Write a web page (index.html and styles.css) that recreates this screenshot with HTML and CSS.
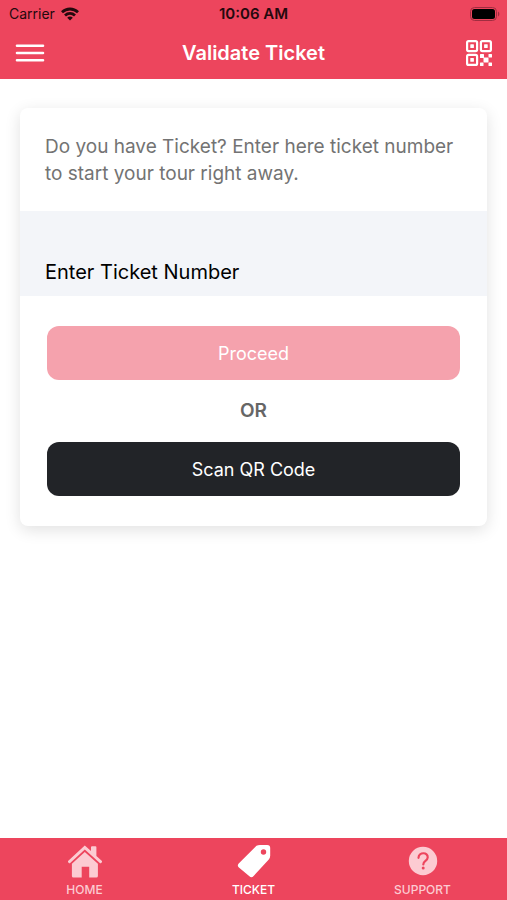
FILE: index.html
```html
<!DOCTYPE html>
<html lang="en">
<head>
<meta charset="utf-8">
<meta name="viewport" content="width=device-width, initial-scale=1">
<title>Validate Ticket</title>
<link rel="stylesheet" href="styles.css">
</head>
<body>
<header class="header">
  <div class="status">
    <div class="carrier">
      <span>Carrier</span>
      <svg width="18" height="14" viewBox="0 0 18 14" fill="none" stroke="currentColor" stroke-width="2.8" aria-hidden="true">
        <path d="M1 5.2C5.6.9 12.4.9 17 5.2"/>
        <path d="M4 8.5c2.9-2.7 7.1-2.7 10 0"/>
        <path d="M6.2 10.7c1.6-1.5 4-1.5 5.6 0L9 13.6z" fill="currentColor" stroke="none"/>
      </svg>
    </div>
    <time>10:06 AM</time>
    <svg class="battery" width="30" height="14" viewBox="0 0 30 14" aria-hidden="true">
      <rect x=".5" y=".5" width="26" height="13" rx="4" fill="none" stroke="#a02d40"/>
      <rect x="2" y="2" width="23" height="10" rx="2.5" fill="#000"/>
      <path d="M28 4.5c1.8.8 1.8 4.2 0 5z" fill="#a02d40"/>
    </svg>
  </div>
  <div class="toolbar">
    <button class="icon-button" type="button" aria-label="Menu">
      <svg width="30" height="20" viewBox="0 0 30 20" stroke="currentColor" stroke-width="2.6" stroke-linecap="round" aria-hidden="true">
        <path d="M2 2.7h26M2 10h26M2 17.3h26"/>
      </svg>
    </button>
    <h1>Validate Ticket</h1>
    <button class="icon-button" type="button" aria-label="Scan QR code">
      <svg width="26" height="26" viewBox="0 0 26 26" fill="currentColor" aria-hidden="true">
        <g fill="none" stroke="currentColor" stroke-width="2.2">
          <rect x="1.1" y="1.1" width="10" height="10" rx="1.5"/>
          <rect x="14.9" y="1.1" width="10" height="10" rx="1.5"/>
          <rect x="1.1" y="14.9" width="10" height="10" rx="1.5"/>
        </g>
        <rect x="4.3" y="4.3" width="3.6" height="3.6" rx=".5"/>
        <rect x="18.1" y="4.3" width="3.6" height="3.6" rx=".5"/>
        <rect x="4.3" y="18.1" width="3.6" height="3.6" rx=".5"/>
        <rect x="14" y="14" width="4" height="4" rx=".5"/>
        <rect x="17.5" y="17.5" width="5" height="5" rx=".5"/>
        <rect x="22.5" y="14" width="3.5" height="3.5" rx=".5"/>
        <rect x="14" y="22.5" width="3.5" height="3.5" rx=".5"/>
        <rect x="22.5" y="22.5" width="3.5" height="3.5" rx=".5"/>
      </svg>
    </button>
  </div>
</header>

<main class="content">
  <form class="card">
    <p class="intro">Do you have Ticket? Enter here ticket number to start your tour right away.</p>
    <input class="ticket-input" type="text" aria-label="Ticket number" placeholder="Enter Ticket Number">
    <div class="actions">
      <button class="button proceed" type="submit" disabled>Proceed</button>
      <p class="or">OR</p>
      <button class="button scan" type="button">Scan QR Code</button>
    </div>
  </form>
</main>

<nav class="tabs">
  <a class="tab" href="#home">
    <svg width="36" height="34" viewBox="0 0 36 34" fill="currentColor" aria-hidden="true">
      <path d="M17.8 1.6 24 7.1V3.2q0-1 1-1h3.4q1 0 1 1v8.7l5.3 4.8q.8.8.1 1.6l-.5.6q-.7.7-1.5 0L17.8 5.5 3.2 18.9q-.8.7-1.5 0l-.5-.6q-.7-.8.1-1.6z"/>
      <path d="m17.8 8 13.1 11.8V32q0 1.6-1.6 1.6h-7.1V22.8h-7.5v10.8H6.5q-1.6 0-1.6-1.6V19.8z"/>
    </svg>
    <span>HOME</span>
  </a>
  <a class="tab active" href="#ticket" aria-current="page">
    <svg width="36" height="34" viewBox="0 0 36 34" fill="currentColor" aria-hidden="true">
      <path fill-rule="evenodd" d="M20.5 1.7Q22 1 24 1h7.2q3 0 3 3v7.8q0 2-1.4 3.6L17.6 32q-2 2.2-4.2.3L2.9 23.5q-2.1-1.9-.2-4zM27.5 5.3a2.7 2.7 0 1 0 0 5.4 2.7 2.7 0 0 0 0-5.4z"/>
    </svg>
    <span>TICKET</span>
  </a>
  <a class="tab" href="#support">
    <svg width="36" height="34" viewBox="0 0 36 34" aria-hidden="true">
      <circle cx="18" cy="17" r="14.2" fill="currentColor"/>
      <path d="M13.5 13.8c.3-6 9.7-6 9.2-.3-.2 3.6-4.4 3.2-4.4 6.9" fill="none" stroke="#ed455d" stroke-width="2.2" stroke-linecap="round"/>
      <circle cx="18.2" cy="24" r="1.5" fill="#ed455d"/>
    </svg>
    <span>SUPPORT</span>
  </a>
</nav>
</body>
</html>
```
FILE: styles.css
```css
* {
  box-sizing: border-box;
}

body {
  display: flex;
  flex-direction: column;
  min-height: 100vh;
  margin: 0;
  background: #fff;
  color: #000;
  font-family: Inter, "Liberation Sans", sans-serif;
}

h1,
p {
  margin: 0;
}

button,
input {
  border: 0;
  font: inherit;
}

.header {
  background: #ed455d;
}

.status,
.toolbar {
  display: grid;
  grid-template-columns: 1fr auto 1fr;
  align-items: center;
}

.status {
  height: 27px;
  padding: 0 7px;
  color: #24090d;
  font-size: 14px;
}

.status time {
  font-size: 15px;
  font-weight: 600;
}

.carrier {
  display: flex;
  align-items: center;
  gap: 6px;
  padding-left: 2px;
}

.battery {
  justify-self: end;
}

.toolbar {
  height: 52px;
  padding: 0 15px;
  color: #fff;
}

.toolbar h1 {
  font-size: 20px;
  font-weight: 600;
}

.icon-button {
  display: flex;
  justify-self: start;
  padding: 0;
  background: none;
  color: inherit;
}

.icon-button:last-child {
  justify-self: end;
}

.content {
  flex: 1;
  padding: 29px 20px;
}

.card {
  overflow: hidden;
  border-radius: 8px;
  background: #fff;
  box-shadow: 0 4px 16px rgba(0, 0, 0, 0.12);
}

.intro {
  padding: 25px 25px 24px;
  color: #737373;
  font-size: 19px;
  line-height: 27px;
}

.ticket-input {
  display: block;
  width: 100%;
  height: 85px;
  padding: 37px 25px 0;
  background: #f3f5f9;
  font-size: 20px;
}

.ticket-input::placeholder {
  color: #000;
  opacity: 1;
}

.actions {
  display: flex;
  flex-direction: column;
  padding: 30px 27px;
}

.button {
  height: 54px;
  border-radius: 12px;
  color: #fff;
  font-size: 18px;
}

.proceed {
  background: #f5a2ad;
}

.scan {
  background: #222428;
}

.or {
  color: #666;
  font-size: 19px;
  font-weight: 600;
  line-height: 62px;
  text-align: center;
}

.tabs {
  display: grid;
  grid-template-columns: repeat(3, 1fr);
  height: 62px;
  padding-top: 6px;
  background: #ed455d;
}

.tab {
  display: flex;
  flex-direction: column;
  align-items: center;
  gap: 4px;
  color: #fccbd2;
  font-size: 12px;
  font-weight: 500;
  line-height: 16px;
  text-decoration: none;
}

.tab.active {
  color: #fff;
}
```
